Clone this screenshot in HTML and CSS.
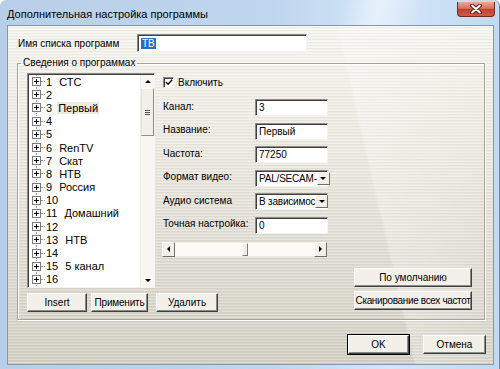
FILE: index.html
```html
<!DOCTYPE html>
<html>
	<head>
		<meta charset="UTF-8">
		<title>Дополнительная настройка программы</title>
		<link rel="stylesheet" href="styles.css">
	</head>
	<body>
		<div class="window">
			<div class="titlebar">
				<span class="title">Дополнительная настройка программы</span>
				<div class="close">
					<svg width="14" height="10" viewBox="0 0 14 10">
						<path d="M3 1.5 L11 8.5 M11 1.5 L3 8.5" stroke="#5a2118" stroke-width="4" stroke-linecap="round"/>
						<path d="M3 1.5 L11 8.5 M11 1.5 L3 8.5" stroke="#fff" stroke-width="2" stroke-linecap="round"/>
					</svg>
				</div>
			</div>
			<div class="client">
				<div class="name_row">
					<span class="name_label">Имя списка программ</span>
					<div class="field name_field"><span class="sel">ТВ</span></div>
				</div>
				<fieldset class="group">
					<legend>Сведения о программах</legend>
					<div class="group_body">
						<div class="listbox">
							<ul class="tree">
								<li><i class="pm"></i><i class="dash"></i><span>1</span><span class="nm">СТС</span></li>
								<li><i class="pm"></i><i class="dash"></i><span>2</span></li>
								<li><i class="pm"></i><i class="dash"></i><span>3</span><span class="nm cur">Первый</span></li>
								<li><i class="pm"></i><i class="dash"></i><span>4</span></li>
								<li><i class="pm"></i><i class="dash"></i><span>5</span></li>
								<li><i class="pm"></i><i class="dash"></i><span>6</span><span class="nm">RenTV</span></li>
								<li><i class="pm"></i><i class="dash"></i><span>7</span><span class="nm">Скат</span></li>
								<li><i class="pm"></i><i class="dash"></i><span>8</span><span class="nm">НТВ</span></li>
								<li><i class="pm"></i><i class="dash"></i><span>9</span><span class="nm">Россия</span></li>
								<li><i class="pm"></i><i class="dash"></i><span>10</span></li>
								<li><i class="pm"></i><i class="dash"></i><span>11</span><span class="nm">Домашний</span></li>
								<li><i class="pm"></i><i class="dash"></i><span>12</span></li>
								<li><i class="pm"></i><i class="dash"></i><span>13</span><span class="nm">НТВ</span></li>
								<li><i class="pm"></i><i class="dash"></i><span>14</span></li>
								<li><i class="pm"></i><i class="dash"></i><span>15</span><span class="nm">5 канал</span></li>
								<li><i class="pm"></i><i class="dash"></i><span>16</span></li>
							</ul>
							<div class="vscroll">
								<div class="sb_btn"><i class="tri_up"></i></div>
								<div class="vthumb"><i class="grip"></i></div>
								<div class="sb_fill"></div>
								<div class="sb_btn"><i class="tri_down"></i></div>
							</div>
						</div>
						<div class="props">
							<div class="check_row">
								<span class="checkbox">
									<svg width="9" height="9" viewBox="0 0 9 9"><path d="M1 4 L3.5 6.5 L8 1.5" fill="none" stroke="#000" stroke-width="1.6"/></svg>
								</span>
								<span>Включить</span>
							</div>
							<div class="fields">
								<span>Канал:</span>
								<div class="field">3</div>
								<span>Название:</span>
								<div class="field">Первый</div>
								<span>Частота:</span>
								<div class="field">77250</div>
								<span>Формат видео:</span>
								<div class="field combo"><span class="combo_text">PAL/SECAM-</span><span class="drop"><i class="tri_down"></i></span></div>
								<span>Аудио система</span>
								<div class="field combo"><span class="combo_text">В зависимос</span><span class="drop"><i class="tri_down"></i></span></div>
								<span>Точная настройка:</span>
								<div class="field">0</div>
							</div>
							<div class="hscroll">
								<div class="sb_btn"><i class="tri_left"></i></div>
								<div class="htrack"><div class="hthumb"></div></div>
								<div class="sb_btn"><i class="tri_right"></i></div>
							</div>
						</div>
						<div class="side_btns">
							<div class="btn">По умолчанию</div>
							<div class="btn tight">Сканирование всех частот</div>
						</div>
						<div class="list_btns">
							<div class="btn b_insert">Insert</div>
							<div class="btn b_apply">Применить</div>
							<div class="btn b_delete">Удалить</div>
						</div>
					</div>
				</fieldset>
				<div class="footer">
					<div class="btn b_ok">OK</div>
					<div class="btn b_cancel">Отмена</div>
				</div>
			</div>
		</div>
	</body>
</html>
```
FILE: styles.css
```css
body{
	margin:0;
	font-family:"Liberation Sans",Arial,sans-serif;
	font-size:10px;
	color:#000;
}
.window{
	width:500px;
	height:369px;
	box-sizing:border-box;
	display:flex;
	flex-direction:column;
	background:linear-gradient(90deg,#b8cfe9 0%,#c0d6ee 55%,#d4e6f8 78%,#c2d9f0 100%);
	border-radius:6px 6px 0 0;
	border-right:1px solid #6f86a1;
}
.titlebar{
	height:25px;
	flex:none;
	display:flex;
	align-items:center;
	padding-left:7px;
	font-size:11px;
	background:linear-gradient(105deg,rgba(255,255,255,0) 68%,rgba(255,255,255,.45) 75%,rgba(255,255,255,0) 84%);
}
.title{
	padding-top:2px;
}
.close{
	align-self:flex-start;
	margin:2px 4px 0 auto;
	width:38px;
	height:15px;
	box-sizing:border-box;
	border:1px solid #6e2b22;
	border-top:none;
	border-radius:0 0 4px 4px;
	background:linear-gradient(#eaa996,#d6745f 45%,#c0402f 52%,#cc5c45);
	display:flex;
	align-items:center;
	justify-content:center;
}
.client{
	flex:1;
	margin:0 5px 4px 7px;
	border:1px solid #8597ad;
	display:flex;
	flex-direction:column;
	background:
		repeating-linear-gradient(180deg,rgba(255,255,255,.25) 0 1px,rgba(0,0,0,.035) 1px 2px,rgba(255,255,255,0) 2px 3px),
		linear-gradient(77deg,rgba(255,255,255,0) 72%,rgba(255,255,255,.3) 72.6%,rgba(255,255,255,0) 95%),
		linear-gradient(180deg,#f7f5ef 0%,#ebe8df 40%,#d3cfc3 100%);
}
.name_row{
	display:flex;
	align-items:center;
	margin-top:8px;
	padding-left:10px;
}
.name_label{
	width:119px;
}
.field{
	box-sizing:border-box;
	height:17px;
	border:1px solid;
	border-color:#8a8a8a #f4f4f4 #f4f4f4 #8a8a8a;
	box-shadow:inset 1px 1px 0 #404040;
	background:#fff;
	display:flex;
	align-items:center;
	padding-left:3px;
	white-space:nowrap;
}
.name_field{
	width:170px;
	height:18px;
}
.sel{
	background:#316ac5;
	color:#fff;
	padding:0 1px;
	line-height:11px;
}
.group{
	margin:5px 0 0 9px;
	width:468px;
	box-sizing:border-box;
	padding:4px 12px 7px 9px;
	border:1px solid #a7a397;
	box-shadow:inset 1px 1px 0 #fff,1px 1px 0 #fff;
	min-width:0;
}
.group legend{
	padding:0 2px;
	margin-left:-6px;
	line-height:12px;
}
.group_body{
	display:grid;
	grid-template-columns:128px 8px 1fr;
	grid-template-rows:195px 20px 24px;
}
.listbox{
	grid-column:1;
	grid-row:1 / 3;
	box-sizing:border-box;
	border:1px solid;
	border-color:#8a8a8a #f4f4f4 #f4f4f4 #8a8a8a;
	box-shadow:inset 1px 1px 0 #404040;
	background:#fff;
	display:flex;
	padding:1px 0 0 1px;
}
.tree{
	flex:1;
	list-style:none;
	margin:0;
	padding:0;
	font-size:11px;
}
.tree li{
	height:13.2px;
	display:flex;
	align-items:center;
	padding-left:3px;
	background:linear-gradient(#9a9a9a 50%,rgba(0,0,0,0) 0) 7px 0 / 1px 2px repeat-y;
}
.pm{
	width:9px;
	height:9px;
	box-sizing:border-box;
	border:1px solid #7b7b7b;
	background:
		linear-gradient(#000,#000) center / 5px 1px no-repeat,
		linear-gradient(#000,#000) center / 1px 5px no-repeat,
		#fff;
}
.dash{
	width:4px;
	height:0;
	border-top:1px dotted #9a9a9a;
	margin-right:1px;
}
.nm{
	margin-left:6px;
	padding:0 1px;
}
.cur{
	background:#efeadf;
	margin-left:5px;
}
.vscroll{
	width:13px;
	display:flex;
	flex-direction:column;
	background:#f7f6f1;
	border-left:1px solid #efece4;
}
.sb_btn{
	width:13px;
	height:13px;
	flex:none;
	display:flex;
	align-items:center;
	justify-content:center;
	box-sizing:border-box;
}
.hscroll .sb_btn{
	height:15px;
	border:1px solid;
	border-color:#fff #6e6e6e #6e6e6e #fff;
	background:#f3f0e9;
}
.vthumb{
	height:48px;
	box-sizing:border-box;
	border:1px solid;
	border-color:#fff #8d8d8d #8d8d8d #e8e5dc;
	background:#f2efe8;
	display:flex;
	align-items:center;
	justify-content:center;
}
.grip{
	width:5px;
	height:5px;
	background:repeating-linear-gradient(#555 0 1px,rgba(0,0,0,0) 1px 2px);
}
.sb_fill{
	flex:1;
}
.tri_up,.tri_down,.tri_left,.tri_right{
	width:0;
	height:0;
	border:3px solid transparent;
}
.tri_up{
	border-bottom-color:#000;
	margin-top:-3px;
}
.tri_down{
	border-top-color:#000;
	margin-bottom:-3px;
}
.tri_left{
	border-right-color:#000;
	margin-left:-3px;
}
.tri_right{
	border-left-color:#000;
	margin-right:-3px;
}
.props{
	grid-column:3;
	grid-row:1;
	padding-top:3px;
	display:flex;
	flex-direction:column;
}
.check_row{
	display:flex;
	align-items:center;
	gap:4px;
	height:12px;
	margin-bottom:11px;
}
.checkbox{
	width:11px;
	height:11px;
	box-sizing:border-box;
	border:1px solid;
	border-color:#8a8a8a #f4f4f4 #f4f4f4 #8a8a8a;
	box-shadow:inset 1px 1px 0 #404040;
	background:#fff;
	display:flex;
	align-items:center;
	justify-content:center;
	padding:1px 0 0 1px;
}
.fields{
	display:grid;
	grid-template-columns:92px 73px;
	grid-auto-rows:17px;
	row-gap:6.6px;
	align-items:center;
}
.fields > span{
	margin-top:-3px;
}
.combo{
	padding-right:0;
}
.combo_text{
	flex:1;
	letter-spacing:-0.2px;
}
.drop{
	width:13px;
	height:13px;
	flex:none;
	box-sizing:border-box;
	border:1px solid;
	border-color:#fff #6e6e6e #6e6e6e #fff;
	background:#f3f0e9;
	display:flex;
	align-items:center;
	justify-content:center;
	margin-right:1px;
}
.hscroll{
	display:flex;
	width:165px;
	margin:8px 0 0 -1px;
	height:15px;
}
.htrack{
	flex:1;
	background:#fcfbf8;
	display:flex;
	border-top:1px solid #eeebe3;
	border-bottom:1px solid #eeebe3;
}
.hthumb{
	margin-left:67px;
	width:6px;
	box-sizing:border-box;
	border:1px solid;
	border-color:#fff #7a7a7a #7a7a7a #fff;
	background:#f0ede6;
}
.btn{
	box-sizing:border-box;
	height:19px;
	border:1px solid;
	border-color:#fff #404040 #404040 #fff;
	box-shadow:inset -1px -1px 0 #8a8a8a;
	background:#f3f0e9;
	display:flex;
	align-items:center;
	justify-content:center;
	white-space:nowrap;
}
.tight{
	letter-spacing:-0.35px;
}
.side_btns{
	grid-column:3;
	grid-row:2 / 4;
	justify-self:end;
	align-self:start;
	width:118px;
	display:flex;
	flex-direction:column;
	gap:4px;
}
.list_btns{
	grid-column:1 / 4;
	grid-row:3;
	justify-self:start;
	align-self:end;
	display:flex;
}
.b_insert{
	width:60px;
}
.b_apply{
	width:57px;
	margin-left:4px;
	letter-spacing:-0.2px;
}
.b_delete{
	width:62px;
	margin-left:8px;
}
.footer{
	display:flex;
	justify-content:flex-end;
	gap:14px;
	margin-top:15px;
	padding-right:7px;
}
.b_ok{
	width:61px;
	outline:1px solid #000;
	outline-offset:0;
}
.b_cancel{
	width:63px;
}
```
